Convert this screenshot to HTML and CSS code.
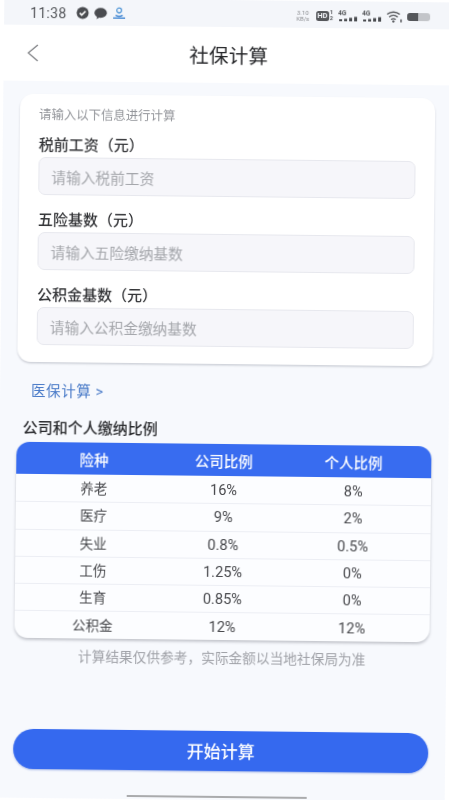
FILE: index.html
```html
<!DOCTYPE html>
<html lang="zh-CN">
<head>
<meta charset="utf-8">
<title>社保计算</title>
<link rel="stylesheet" href="styles.css">
</head>
<body>
<div class="screen">
  <div class="status">
    <div class="status-left">
      <span class="time">11:38</span>
      <svg class="ic" width="13" height="13" viewBox="0 0 13 13"><circle cx="6.5" cy="6.5" r="6" fill="#4a4c50"/><path d="M3.6 6.6l2 2 3.8-3.8" fill="none" stroke="#fff" stroke-width="1.6"/></svg>
      <svg class="ic" width="13" height="12" viewBox="0 0 13 12"><ellipse cx="6.5" cy="5.2" rx="6.2" ry="5" fill="#4a4c50"/><path d="M3 8.5l-.5 3 3.5-2z" fill="#4a4c50"/></svg>
      <svg class="ic" width="14" height="13" viewBox="0 0 14 13"><circle cx="7" cy="3.6" r="2.4" fill="none" stroke="#5a9bd8" stroke-width="1.3"/><path d="M3.5 8.4c2 1.3 5 1.3 7 0M1 11.2h12" fill="none" stroke="#4f8fd6" stroke-width="1.5"/></svg>
    </div>
    <div class="status-right">
      <span class="speed"><span>3.10</span><span>KB/s</span></span>
      <span class="hd"><span class="hd-box">HD</span><span class="hd-num"><span>1</span><span>2</span></span></span>
      <span class="net"><span class="net-g">4G</span><svg width="19" height="5" viewBox="0 0 19 5"><path d="M1 5V3h3v2zM6 5V2.500h3V5zM11 5V1.500h3V5zM16 5V.5h3V5z" fill="#4a4c50"/></svg></span>
      <span class="net"><span class="net-g">4G</span><svg width="19" height="5" viewBox="0 0 19 5"><path d="M1 5V3h3v2zM6 5V2.500h3V5zM11 5V1.500h3V5zM16 5V.5h3V5z" fill="#4a4c50"/></svg></span>
      <svg width="16" height="12" viewBox="0 0 16 12"><path d="M1 3.6c3.6-3.2 9-3.2 12.6 0M3 6.2c2.6-2.2 6-2.2 8.6 0M5 8.7c1.500-1.100 3-1.100 4.600 0" fill="none" stroke="#55575b" stroke-width="1.400"/><circle cx="7.300" cy="10.600" r="1.200" fill="#55575b"/><rect x="14.200" y="8.400" width="1.500" height="3" fill="#55575b"/></svg>
      <span class="battery"><span class="battery-fill"></span></span>
    </div>
  </div>

  <header class="nav">
    <svg class="back" width="12" height="18" viewBox="0 0 12 18"><path d="M11 1L1.500 9l9.500 8" fill="none" stroke="#77797d" stroke-width="1.100"/></svg>
    <h1 class="title">社保计算</h1>
  </header>

  <main class="content">
    <section class="card">
      <p class="hint">请输入以下信息进行计算</p>
      <label class="field-label">税前工资（元）</label>
      <div class="input">请输入税前工资</div>
      <label class="field-label">五险基数（元）</label>
      <div class="input">请输入五险缴纳基数</div>
      <label class="field-label">公积金基数（元）</label>
      <div class="input">请输入公积金缴纳基数</div>
    </section>

    <a class="link">医保计算 &gt;</a>
    <h2 class="section-title">公司和个人缴纳比例</h2>

    <div class="table">
      <div class="row head"><span>险种</span><span>公司比例</span><span>个人比例</span></div>
      <div class="row"><span class="name">养老</span><span class="num">16%</span><span class="num">8%</span></div>
      <div class="row"><span class="name">医疗</span><span class="num">9%</span><span class="num">2%</span></div>
      <div class="row"><span class="name">失业</span><span class="num">0.8%</span><span class="num">0.5%</span></div>
      <div class="row"><span class="name">工伤</span><span class="num">1.25%</span><span class="num">0%</span></div>
      <div class="row"><span class="name">生育</span><span class="num">0.85%</span><span class="num">0%</span></div>
      <div class="row"><span class="name">公积金</span><span class="num">12%</span><span class="num">12%</span></div>
    </div>

    <p class="note">计算结果仅供参考，实际金额以当地社保局为准</p>

    <button class="cta">开始计算</button>
    <div class="home-bar"></div>
  </main>
</div>
</body>
</html>
```

FILE: styles.css
```css
* { box-sizing: border-box; }
html, body { margin: 0; padding: 0; background: #fff; overflow: hidden; }
body { width: 449px; height: 800px; font-family: Roboto, "Noto Sans CJK SC", sans-serif; color: #2a2b2e; }

.screen {
  width: 449px;
  height: 800px;
  display: flex;
  flex-direction: column;
  background: #f7f9fd;
  transform: rotate(0.62deg);
  filter: blur(0.4px);
}

.status {
  height: 27px;
  flex: none;
  padding: 2px 23px 0 26px;
  background: #f4f6fa;
  display: flex;
  align-items: center;
  justify-content: space-between;
}
.status-left { display: flex; align-items: center; gap: 5px; }
.status-left .time { font-size: 14px; color: #55575b; letter-spacing: .3px; margin-right: 5px; }
.status-right { display: flex; align-items: center; gap: 5px; color: #55575b; }
.speed { display: flex; flex-direction: column; align-items: center; font-size: 6px; line-height: 6px; color: #8a8c90; width: 16px; }
.hd { display: flex; align-items: center; gap: 1px; }
.hd-box { background: #55575b; color: #f4f6fa; font-size: 7.500px; font-weight: 700; line-height: 10px; padding: 0 1.500px; border-radius: 2.500px; }
.hd-num { display: flex; flex-direction: column; font-size: 5.500px; line-height: 5.500px; font-weight: 700; }
.net { display: flex; flex-direction: column; width: 19px; }
.net-g { font-size: 6.500px; line-height: 6px; font-weight: 700; }
.battery { width: 23px; height: 8px; background: #c3c5c9; border-radius: 3px; overflow: hidden; display: block; }
.battery-fill { display: block; width: 11px; height: 8px; background: #55575b; }

.nav {
  height: 56px;
  flex: none;
  background: #fff;
  position: relative;
  display: flex;
  align-items: center;
  justify-content: center;
}
.back { position: absolute; left: 23px; top: 19px; }
.title { margin: 4px 0 0 1px; font-size: 19.500px; font-weight: 400; color: #26272a; line-height: 26px; letter-spacing: .2px; }

.content { flex: 1; padding: 13px 17px 0; display: flex; flex-direction: column; min-height: 0; }

.card {
  height: 268px;
  flex: none;
  background: #fff;
  border-radius: 13px;
  padding: 13px 19px 0;
  box-shadow: 0 1.500px 2px rgba(60, 65, 80, .22);
}
.hint { margin: 0 0 12px; font-size: 12.400px; line-height: 16px; color: #93959a; }
.field-label { display: block; font-size: 15px; line-height: 20px; font-weight: 500; color: #333437; }
.input {
  height: 38px;
  margin-top: 2px;
  margin-bottom: 15px;
  padding: 0 12px;
  display: flex;
  align-items: center;
  font-size: 14.700px;
  color: #a4a6ab;
  background: #f6f6fa;
  border: 1px solid #e7e8ee;
  border-radius: 7px;
}
.input:last-child { margin-bottom: 0; }

.link { display: block; margin: 20px 0 0 14px; font-size: 14.500px; line-height: 20px; color: #4a7bc8; letter-spacing: .6px; }
.section-title { margin: 16px 0 0 6px; font-size: 15px; line-height: 20px; font-weight: 500; color: #2a2b2e; }

.table {
  margin-top: 4px;
  flex: none;
  border-radius: 13px;
  background: #fcfdff;
  box-shadow: 0 2px 3px rgba(60, 65, 80, .28);
  overflow: hidden;
}
.row {
  display: grid;
  grid-template-columns: repeat(3, 1fr);
  padding: 0 13px;
  height: 27.300px;
  align-items: center;
  text-align: center;
  font-size: 13.500px;
  color: #48494d;
  border-top: 1px solid #eceef4;
}
.row .name { margin-top: -2px; }
.row .num { font-size: 14.600px; }
.row.head { height: 32px; background: #386cf0; color: #fff; font-size: 14.500px; font-weight: 500; border-top: 0; }
.row.head + .row { border-top: 0; }

.note { margin: 9px 0 0; text-align: center; font-size: 13.700px; line-height: 18px; color: #a0a2a8; }

.cta {
  margin-top: 64px;
  height: 40px;
  flex: none;
  border: 0;
  border-radius: 20px;
  background: #3569ef;
  color: #fff;
  font-family: inherit;
  font-size: 17px;
  font-weight: 500;
  box-shadow: 0 1px 2px rgba(40, 80, 200, .4);
}
.home-bar { width: 180px; height: 2px; margin: 25px auto 0; background: #aaabad; transform: translateX(-4px); }
```
